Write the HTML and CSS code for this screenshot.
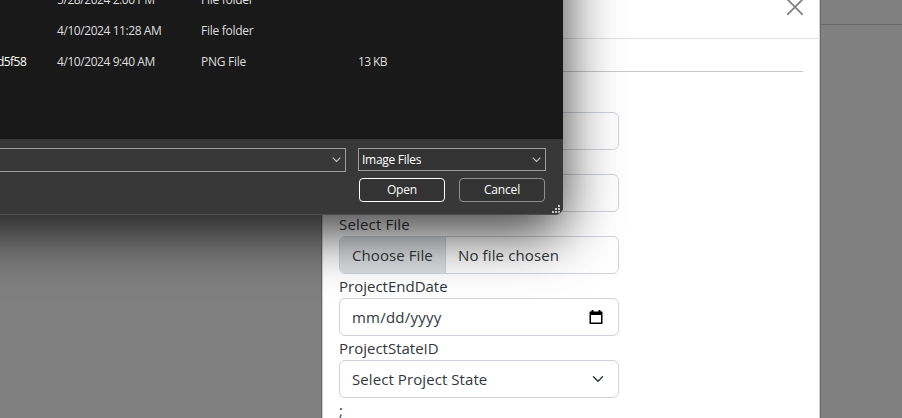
FILE: index.html
```html
<!DOCTYPE html>
<html lang="en">
<head>
<meta charset="utf-8">
<title>Project</title>
<link rel="stylesheet" href="styles.css">
</head>
<body>
<div class="page-bar"></div>
<main class="modal">
  <header class="modal-header">
    <svg class="close" viewBox="0 0 16 16" width="16" height="16"><path d="M0.7 0.7 15.3 15.3M15.3 0.7 0.7 15.3" fill="none" stroke="#808080" stroke-width="1.8" stroke-linecap="round"/></svg>
  </header>
  <form class="modal-body">
    <div class="rule"></div>
    <div class="label"></div>
    <div class="control"></div>
    <div class="label"></div>
    <div class="control"></div>
    <div class="label"><span class="t-select-file">Select File</span></div>
    <div class="control file"><div class="choose"><span class="t-choose">Choose File</span></div><span class="t-none">No file chosen</span></div>
    <div class="label"><span class="t-end">ProjectEndDate</span></div>
    <div class="control padded"><span class="t-date">mm/dd/yyyy</span>
      <svg class="calendar" viewBox="0 0 14 16" width="14" height="16"><path d="M.5 2.5h13V15H.5zM2.5 1h2v2h-2zM9.5 1h2v2h-2z" fill="#000"/><path d="M2 6h10v7.6H2z" fill="#fff"/></svg>
    </div>
    <div class="label"><span class="t-state">ProjectStateID</span></div>
    <div class="control padded"><span class="t-option">Select Project State</span>
      <svg class="chevron" viewBox="0 0 16 16" width="12" height="12"><path fill="none" stroke="#343a40" stroke-linecap="round" stroke-linejoin="round" stroke-width="2" d="m2 5 6 6 6-6"/></svg>
    </div>
    <div class="label">;</div>
  </form>
</main>
<section class="dialog">
  <div class="files">
    <div class="row"><span></span><span class="f-date">5/28/2024 2:00 PM</span><span class="f-kind">File folder</span><span></span></div>
    <div class="row"><span></span><span class="f-date">4/10/2024 11:28 AM</span><span class="f-kind">File folder</span><span></span></div>
    <div class="row"><span class="f-name">d5f58</span><span class="f-date">4/10/2024 9:40 AM</span><span class="f-kind">PNG File</span><span class="f-size">13 KB</span></div>
  </div>
  <div class="actions">
    <div class="selects">
      <div class="combo name"><svg viewBox="0 0 9 6" width="9" height="6"><path d="M.7.7 4.5 4.5 8.3.7" fill="none" stroke="#c4c4c4" stroke-width="1.1"/></svg></div>
      <div class="combo type"><span class="t-image">Image Files</span><svg viewBox="0 0 9 6" width="9" height="6"><path d="M.7.7 4.5 4.5 8.3.7" fill="none" stroke="#c4c4c4" stroke-width="1.1"/></svg></div>
    </div>
    <div class="buttons">
      <div class="button primary"><span class="t-button">Open</span></div>
      <div class="button"><span class="t-button">Cancel</span></div>
    </div>
    <svg class="grip" viewBox="0 0 8 8" width="8" height="8"><path d="M6 0h2v2H6zM3 3h2v2H3zM6 3h2v2H6zM0 6h2v2H0zM3 6h2v2H3zM6 6h2v2H6z" fill="#c8c8c8"/></svg>
  </div>
</section>
</body>
</html>
```
FILE: styles.css
```css
* { box-sizing: border-box; }
body {
  margin: 0;
  height: 418px;
  position: relative;
  overflow: hidden;
  background: #808080;
  font-family: "Open Sans", "Noto Sans", sans-serif;
  font-size: 15px;
  line-height: 24px;
  color: #33373b;
}
span { white-space: nowrap; }
.page-bar { height: 25px; border-bottom: 1px solid #686868; }
.modal {
  width: 500px;
  height: 420px;
  margin: -25px 0 0 321px;
  background: #fff;
  border: solid #696969;
  border-width: 0 1px;
  box-shadow: inset 1px 0 #d0d0d0, inset -1px 0 #d0d0d0;
  position: relative;
}
.modal-header {
  height: 39px;
  border-bottom: 1px solid #dee2e6;
  display: flex;
  justify-content: flex-end;
  padding: 0 17px;
}
.close { margin-top: -1px; }
.modal-body { padding: 32px 17px 0; }
.rule { height: 1px; background: #c7c8c9; margin-bottom: 16px; }
.label { height: 24px; }
.control {
  width: 280px;
  height: 38px;
  border: 1px solid #ced4da;
  border-radius: 6px;
  display: flex;
  align-items: center;
  overflow: hidden;
}
.padded { padding: 0 14px 0 12px; justify-content: space-between; }
.choose {
  width: 106px;
  height: 100%;
  margin-right: 12px;
  padding: 6px 12px;
  background: #dde0e3;
  border-right: 1px solid #ced4da;
}
.calendar { margin-right: 1px; }
.t-select-file { letter-spacing: .17px; }
.t-choose, .t-option { letter-spacing: .08px; }
.t-none { letter-spacing: .13px; }
.t-date { letter-spacing: .22px; }

.dialog {
  position: absolute;
  top: -200px;
  left: -200px;
  width: 763px;
  height: 415px;
  padding: 184px 0 0 200px;
  background: #191919;
  border-bottom: 1px solid #4d4d4d;
  border-bottom-right-radius: 8px;
  box-shadow: 0 18px 56px rgba(0, 0, 0, .78);
  color: #dedede;
  font-size: 12px;
  display: flex;
  flex-direction: column;
  overflow: hidden;
}
.files { height: 155px; }
.row {
  display: grid;
  grid-template-columns: 57px 144px 157px 1fr;
  height: 31px;
  line-height: 31px;
}
.f-name { color: #fff; margin-left: -3px; letter-spacing: -.55px; }
.f-date { letter-spacing: -.43px; }
.f-kind { letter-spacing: -.27px; }
.f-size { letter-spacing: -.6px; }
.t-image { letter-spacing: -.28px; }
.t-button { letter-spacing: -.15px; }
.actions {
  flex: 1;
  background: #383838;
  padding-top: 9px;
  color: #fff;
  position: relative;
}
.selects { display: flex; gap: 12px; align-items: flex-start; }
.combo {
  border: 1px solid #9b9b9b;
  display: flex;
  align-items: center;
  justify-content: space-between;
  padding: 0 4px 0 3px;
}
.name { width: 346px; height: 24px; border-left: 0; justify-content: flex-end; }
.type { width: 188px; height: 23px; background: #333; }
.buttons { display: flex; gap: 14px; margin: 6px 0 0 359px; }
.button {
  width: 86px;
  height: 24px;
  border: 1px solid #8f8f8f;
  border-radius: 4px;
  background: #333;
  display: flex;
  align-items: center;
  justify-content: center;
}
.primary { border-color: #fff; }
.grip { position: absolute; right: 3px; bottom: 1px; }
```
